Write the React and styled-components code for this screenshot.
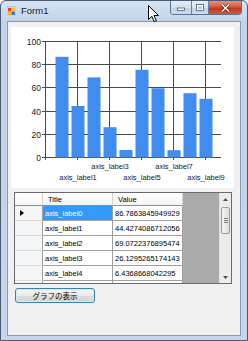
import React from "react";
import styled, { createGlobalStyle } from "styled-components";

const GlobalStyle = createGlobalStyle`
    html, body {
        margin: 0;
        padding: 0;
        width: 248px;
        height: 341px;
        overflow: hidden;
        background: #ffffff;
    }
`;

// the last row is only a sliver under the scroll edge, its text is not visible
const rows = [
    { title: "axis_label0", value: "86.7863845949929" },
    { title: "axis_label1", value: "44.4274086712056" },
    { title: "axis_label2", value: "69.0722376895474" },
    { title: "axis_label3", value: "26.1295265174143" },
    { title: "axis_label4", value: "6.4368668042295" },
    { title: "", value: "" },
];

const barValues = [86.79, 44.43, 69.07, 26.13, 6.44, 75.61, 59.7, 6.3, 55.4, 50.6];

const Window = styled.div`
    position: relative;
    width: 248px;
    height: 341px;
    box-sizing: border-box;
    border: 1px solid #4b5a6e;
    border-radius: 6px 6px 0 0;
    background: linear-gradient(to bottom, #d6e4f4 0px, #c0d3ea 22px, #c3d6ec 100%);
    padding: 0 6px 4px 6px;
    display: flex;
    flex-direction: column;
    font-family: "Liberation Sans", Arial, sans-serif;
`;

const TitleBar = styled.div`
    height: 20px;
    display: flex;
    align-items: flex-start;
`;

const AppIcon = styled.svg`
    width: 9px;
    height: 10px;
    margin-top: 5px;
`;

const Caption = styled.span`
    margin-left: 5px;
    margin-top: 3px;
    font-size: 9.5px;
    line-height: 14px;
    color: #1a1a1a;
`;

const Spacer = styled.div`
    flex: 1;
`;

const CaptionButtons = styled.div`
    display: flex;
    height: 13px;
    margin-right: -1px;
    border: 1px solid #5f7089;
    border-top: none;
    border-radius: 0 0 4px 4px;
    overflow: hidden;
`;

const CapButton = styled.div`
    width: ${(p) => p.$w}px;
    height: 13px;
    display: flex;
    align-items: center;
    justify-content: center;
    box-sizing: border-box;
    border-left: ${(p) => (p.$first ? "none" : "1px solid #6f819a")};
    background-color: ${(p) => (p.$close ? "#c94a35" : "#d0dced")};
    background-image: ${(p) =>
        p.$close
            ? "linear-gradient(to bottom, #e8917d 0%, #d35a44 45%, #bf3720 55%, #d0583c 100%)"
            : "linear-gradient(to bottom, #e6eef8, #d3e0ef 50%, #bfd0e5 55%, #cedcee)"};
`;

const Client = styled.div`
    flex: 1;
    background: #f0f0f0;
    border: 1px solid #8a9ab0;
    display: flex;
    flex-direction: column;
    align-items: flex-start;
`;

const ChartBox = styled.div`
    margin: 5px 0 0 3px;
    width: 223px;
    height: 161px;
    background: #ffffff;
`;

const DataGrid = styled.div`
    margin: 4px 0 0 6px;
    width: 218px;
    height: 92px;
    box-sizing: border-box;
    border: 1px solid #6a6a6a;
    display: flex;
    background: #ababab;
    overflow: hidden;
`;

const GridTable = styled.div`
    display: grid;
    grid-template-columns: 28px 70px 70px;
    grid-template-rows: 13px;
    grid-auto-rows: 15px;
    height: 90px;
    overflow: hidden;
    font-size: 7.5px;
    color: #000000;
`;

const HeaderCell = styled.div`
    box-sizing: border-box;
    background: linear-gradient(to bottom, #ffffff, #f3f4f6);
    border-right: 1px solid #d5d5d5;
    border-bottom: 1px solid #8e8e8e;
    padding-left: ${(p) => (p.$corner ? 0 : 5)}px;
    display: flex;
    align-items: center;
`;

const RowHeader = styled.div`
    box-sizing: border-box;
    background: #f4f5f7;
    border-right: 1px solid #a0a0a0;
    border-bottom: 1px solid #dadada;
    display: flex;
    align-items: center;
    padding-left: 5px;
`;

const Cell = styled.div`
    box-sizing: border-box;
    border-right: 1px solid #a0a0a0;
    border-bottom: 1px solid #a0a0a0;
    background: ${(p) => (p.$selected ? "#3399ff" : "#ffffff")};
    color: ${(p) => (p.$selected ? "#ffffff" : "#000000")};
    padding-left: 2px;
    display: flex;
    align-items: center;
    white-space: nowrap;
    overflow: hidden;
`;

const Filler = styled.div`
    flex: 1;
`;

const VScroll = styled.div`
    width: 12px;
    height: 90px;
    background: #ececec;
    border-left: 1px solid #e2e2e2;
    box-sizing: border-box;
    display: flex;
    flex-direction: column;
    align-items: center;
`;

const ScrollArrow = styled.div`
    width: 11px;
    height: 12px;
    display: flex;
    align-items: center;
    justify-content: center;
`;

const Thumb = styled.div`
    width: 9px;
    height: 27px;
    margin-top: 2px;
    box-sizing: border-box;
    border: 1px solid #9a9a9a;
    border-radius: 2px;
    background: linear-gradient(to right, #f5f5f5, #dedede);
    display: flex;
    flex-direction: column;
    align-items: center;
    justify-content: center;
    gap: 1px;
`;

const Grip = styled.div`
    width: 4px;
    height: 1px;
    background: #7c7c7c;
`;

const ScrollTrack = styled.div`
    flex: 1;
`;

const ShowButton = styled.button`
    margin: 4px 0 0 7px;
    width: 80px;
    height: 15px;
    padding: 0;
    box-sizing: border-box;
    border: 1px solid #3c7fb1;
    border-radius: 3px;
    background: linear-gradient(to bottom, #f4f4f4 0%, #ebebeb 50%, #dcdcdc 55%, #d3d3d3 100%);
    box-shadow: inset 0 0 0 1px #d4ecfa;
    display: flex;
    align-items: center;
    justify-content: center;
    font-family: "Noto Sans CJK JP", "Liberation Sans", sans-serif;
    font-size: 7.5px;
    line-height: 1;
    color: #000000;
`;

const Cursor = styled.svg`
    position: absolute;
    left: 147px;
    top: 4px;
    width: 12px;
    height: 18px;
`;

const Chart = () => {
    const x0 = 34;
    const x1 = 210;
    const yTop = 14;
    const yBot = 130;
    const unit = 16;
    const yScale = (yBot - yTop) / 100;
    const yTicks = [0, 20, 40, 60, 80, 100];
    const vGrid = [0, 2, 4, 6, 8, 10];
    return (
        <svg width="223" height="161" style={{ display: "block" }}>
            {yTicks.map((t) => {
                const y = Math.round(yBot - t * yScale) + 0.5;
                return (
                    <g key={t}>
                        <line x1={x0 - 3} y1={y} x2={x1} y2={y} stroke="#4a4a4a" strokeWidth="1" />
                        <text
                            x={x0 - 4}
                            y={y + 3}
                            textAnchor="end"
                            fontSize="8.5"
                            fontFamily="Liberation Sans, Arial, sans-serif"
                            fill="#1a1a1a"
                        >
                            {t}
                        </text>
                    </g>
                );
            })}
            {vGrid.map((g) => {
                const x = x0 + g * unit + 0.5;
                return <line key={g} x1={x} y1={yTop} x2={x} y2={yBot + 3} stroke="#4a4a4a" strokeWidth="1" />;
            })}
            {barValues.map((v, i) => {
                const cx = x0 + (i + 1) * unit + 1;
                const h = v * yScale;
                return <rect key={i} x={cx - 6.5} y={yBot - h + 0.5} width="13" height={h} fill="#418cf0" />;
            })}
            {[1, 3, 5, 7, 9].map((n, i) => (
                <text
                    key={n}
                    x={x0 + (n + 1) * unit + 1}
                    y={i % 2 === 0 ? 153 : 142}
                    textAnchor="middle"
                    fontSize="7.5"
                    fontFamily="Liberation Sans, Arial, sans-serif"
                    fill="#1a1a1a"
                >
                    {`axis_label${n}`}
                </text>
            ))}
        </svg>
    );
};

export default function App() {
    return (
        <>
            <GlobalStyle />
            <Window>
                <TitleBar>
                    <AppIcon viewBox="0 0 9 10">
                        <rect x="0" y="1" width="9" height="9" fill="#f2f2f2" stroke="#8a8a8a" strokeWidth="0.6" />
                        <rect x="1" y="2" width="3.5" height="3.5" fill="#d9442e" />
                        <rect x="4.5" y="2" width="3.5" height="3.5" fill="#f2c130" />
                        <rect x="1" y="5.5" width="3.5" height="3.5" fill="#f0b030" />
                        <rect x="4.5" y="5.5" width="3.5" height="3.5" fill="#3d72d6" />
                    </AppIcon>
                    <Caption>Form1</Caption>
                    <Spacer />
                    <CaptionButtons>
                        <CapButton $w={20} $first>
                            <svg width="8" height="6" viewBox="0 0 8 6">
                                <rect x="0.5" y="3" width="7" height="2.5" fill="#ffffff" stroke="#4a5a70" strokeWidth="0.8" />
                            </svg>
                        </CapButton>
                        <CapButton $w={17}>
                            <svg width="8" height="7" viewBox="0 0 8 7">
                                <rect x="0.5" y="0.5" width="7" height="6" fill="#ffffff" stroke="#4a5a70" strokeWidth="0.8" />
                                <rect x="2" y="2.5" width="4" height="2.5" fill="#b8c8dc" />
                            </svg>
                        </CapButton>
                        <CapButton $w={33} $close>
                            <svg width="9" height="8" viewBox="0 0 9 8">
                                <path d="M1 0.5 L8 7.5 M8 0.5 L1 7.5" stroke="#6a2015" strokeWidth="2.6" />
                                <path d="M1 0.5 L8 7.5 M8 0.5 L1 7.5" stroke="#ffffff" strokeWidth="1.4" />
                            </svg>
                        </CapButton>
                    </CaptionButtons>
                </TitleBar>
                <Client>
                    <ChartBox>
                        <Chart />
                    </ChartBox>
                    <DataGrid>
                        <GridTable>
                            <HeaderCell $corner />
                            <HeaderCell>Title</HeaderCell>
                            <HeaderCell>Value</HeaderCell>
                            {rows.map((r, i) => (
                                <React.Fragment key={i}>
                                    <RowHeader>
                                        {i === 0 && (
                                            <svg width="4" height="6" viewBox="0 0 4 6">
                                                <path d="M0 0 L4 3 L0 6 Z" fill="#000000" />
                                            </svg>
                                        )}
                                    </RowHeader>
                                    <Cell $selected={i === 0}>{r.title}</Cell>
                                    <Cell>{r.value}</Cell>
                                </React.Fragment>
                            ))}
                        </GridTable>
                        <Filler />
                        <VScroll>
                            <ScrollArrow>
                                <svg width="5" height="3" viewBox="0 0 5 3">
                                    <path d="M0 3 L2.5 0 L5 3 Z" fill="#4d4d4d" />
                                </svg>
                            </ScrollArrow>
                            <Thumb>
                                <Grip />
                                <Grip />
                                <Grip />
                            </Thumb>
                            <ScrollTrack />
                            <ScrollArrow>
                                <svg width="5" height="3" viewBox="0 0 5 3">
                                    <path d="M0 0 L2.5 3 L5 0 Z" fill="#4d4d4d" />
                                </svg>
                            </ScrollArrow>
                        </VScroll>
                    </DataGrid>
                    <ShowButton>グラフの表示</ShowButton>
                </Client>
                <Cursor viewBox="0 0 12 18">
                    <path d="M0.5 0.5 L0.5 14.5 L3.8 11.3 L6.3 16.8 L8.4 15.9 L6 10.5 L10.5 10.5 Z" fill="#ffffff" stroke="#000000" strokeWidth="1" />
                </Cursor>
            </Window>
        </>
    );
}
